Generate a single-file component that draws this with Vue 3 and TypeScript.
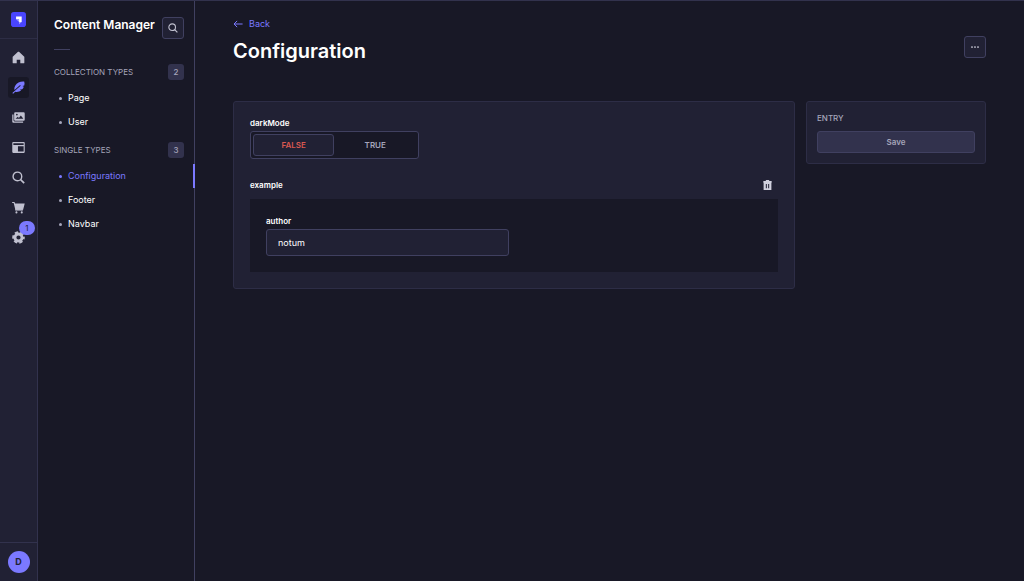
<script setup lang="ts">
import { ref } from 'vue'

interface NavEntry {
  id: string
  label: string
  badge?: number
}

interface Section {
  title: string
  items: string[]
}

const navEntries: NavEntry[] = [
  { id: 'home', label: 'Home' },
  { id: 'content', label: 'Content Manager' },
  { id: 'media', label: 'Media Library' },
  { id: 'builder', label: 'Content-Type Builder' },
  { id: 'search', label: 'Search' },
  { id: 'market', label: 'Marketplace' },
  { id: 'settings', label: 'Settings', badge: 1 },
]

const sections: Section[] = [
  { title: 'Collection types', items: ['Page', 'User'] },
  { title: 'Single types', items: ['Configuration', 'Footer', 'Navbar'] },
]

const activeItem = ref('Configuration')
const darkMode = ref(false)
const author = ref('notum')
</script>

<template>
  <div class="app">
    <nav class="rail" aria-label="Main">
      <a class="brand" href="#" aria-label="Dashboard">
        <svg viewBox="0 0 16 16" width="15" height="15">
          <rect width="16" height="16" rx="3" fill="#4945ff" />
          <path d="M5.400 4.800h6v5.800H8.600V7.700H5.400z" fill="#fff" />
          <path d="M8.600 10.600V7.700H5.500z" fill="#a5a3ff" />
          <path d="M8.600 10.600h2.800l-2.800 2.500z" fill="#a5a3ff" />
        </svg>
      </a>
      <ul class="rail-list">
        <li v-for="entry in navEntries" :key="entry.id">
          <a class="rail-link" :class="{ active: entry.id === 'content' }" href="#" :aria-label="entry.label">
            <svg v-if="entry.id === 'home'" viewBox="0 0 24 24" width="13" height="13" fill="currentColor">
              <path d="M12 1.200c.5 0 1 .2 1.400.6l8.800 8.200c.4.4.6.8.6 1.300V21.500c0 .8-.6 1.300-1.300 1.300h-6.200V16h-6.600v6.800H2.500c-.8 0-1.300-.6-1.300-1.300V11.300c0-.5.2-1 .6-1.300l8.800-8.200c.4-.4.900-.6 1.400-.6z" />
            </svg>
            <svg v-else-if="entry.id === 'content'" viewBox="0 0 24 24" width="13" height="13" fill="currentColor">
              <path d="M22.500 1C16 .2 9.300 3 6.200 8.200c-1.900 3-2.100 5.800-1.600 8.300L15 7.600l1 1.100L3.200 19.700.6 22.100l1.500 1.600 3.900-3.700c3.900.9 8-.1 10.900-2.700l-2.700-1.200 4.600-.7c1.300-1.400 2.400-3 3-4.900l-2.600-1.100 3.400-1c.8-2.400.8-4.900-.1-7.400z" />
            </svg>
            <svg v-else-if="entry.id === 'media'" viewBox="0 0 24 24" width="13" height="13">
              <path fill="currentColor" fill-rule="evenodd" d="M6 2.500h15.500a2 2 0 0 1 2 2v11.500a2 2 0 0 1-2 2H6a2 2 0 0 1-2-2V4.500a2 2 0 0 1 2-2zm.5 12h14.500l-4.700-6-3.600 4.200-2-2zM9 5a1.600 1.600 0 1 0 0 3.200A1.600 1.600 0 0 0 9 5z" />
              <path fill="currentColor" d="M.5 6.500h2.300v11.200c0 .9.700 1.600 1.600 1.600H20.500v2.500H2.500a2 2 0 0 1-2-2z" />
            </svg>
            <svg v-else-if="entry.id === 'builder'" viewBox="0 0 24 24" width="13" height="13" fill="currentColor">
              <path fill-rule="evenodd" d="M2 2h20a1.500 1.500 0 0 1 1.500 1.500v17A1.500 1.500 0 0 1 22 22H2A1.500 1.500 0 0 1 .5 20.500v-17A1.500 1.500 0 0 1 2 2zm.5 2.300v3.200h19V4.300zM11 9.800v9.800h10.500V9.800z" />
            </svg>
            <svg v-else-if="entry.id === 'search'" class="stroked" viewBox="0 0 24 24" width="13" height="13">
              <circle cx="10" cy="10" r="8" stroke-width="2.600" />
              <path d="M15.900 15.900L22.500 22.500" stroke-width="3" />
            </svg>
            <svg v-else-if="entry.id === 'market'" viewBox="0 0 24 24" width="13" height="13" fill="currentColor">
              <path d="M.3 1.800h4.300l1 2.600h17.900l-3 11.800H6.200L3.100 3.800H.3z" />
              <path d="M6 15h14v2.700H6z" />
              <circle cx="8.200" cy="21" r="1.900" />
              <circle cx="18" cy="21" r="1.900" />
            </svg>
            <svg v-else viewBox="0 0 24 24" width="13" height="13">
              <circle cx="12" cy="12" r="6.600" fill="none" stroke="currentColor" stroke-width="5.400" />
              <circle cx="12" cy="12" r="9.700" fill="none" stroke="currentColor" stroke-width="3.800" stroke-dasharray="6.160 4" stroke-dashoffset="3" />
            </svg>
            <span v-if="entry.badge" class="rail-badge">{{ entry.badge }}</span>
          </a>
        </li>
      </ul>
      <div class="account">
        <button class="avatar" type="button" aria-label="Account">D</button>
      </div>
    </nav>

    <aside class="subnav">
      <header class="subnav-head">
        <h2>Content Manager</h2>
        <button class="icon-button" type="button" aria-label="Search">
          <svg class="stroked" viewBox="0 0 24 24" width="10" height="10">
            <circle cx="10" cy="10" r="8" stroke-width="2.600" />
            <path d="M15.900 15.900L22.500 22.500" stroke-width="2.800" />
          </svg>
        </button>
      </header>
      <hr class="short-rule" />
      <section v-for="section in sections" :key="section.title" class="group">
        <div class="group-head">
          <h3>{{ section.title }}</h3>
          <span class="count">{{ section.items.length }}</span>
        </div>
        <ul>
          <li v-for="item in section.items" :key="item">
            <a class="sub-link" :class="{ active: item === activeItem }" href="#" @click.prevent="activeItem = item">{{ item }}</a>
          </li>
        </ul>
      </section>
    </aside>

    <main class="main">
      <a class="back" href="#">
        <svg class="stroked" viewBox="0 0 24 24" width="10" height="10">
          <path d="M23 12H2.500M10 4.500L2.500 12l7.500 7.500" stroke-width="2.400" />
        </svg>
        Back
      </a>
      <div class="title-row">
        <h1>Configuration</h1>
        <button class="icon-button" type="button" aria-label="More actions">
          <svg viewBox="0 0 16 4" width="8" height="2" fill="#e0e0ee">
            <circle cx="2" cy="2" r="1.700" />
            <circle cx="8" cy="2" r="1.700" />
            <circle cx="14" cy="2" r="1.700" />
          </svg>
        </button>
      </div>

      <div class="columns">
        <form class="panel fields" @submit.prevent>
          <fieldset class="toggle-field">
            <legend>darkMode</legend>
            <div class="toggle">
              <button type="button" class="option" :class="{ off: !darkMode }" :aria-pressed="!darkMode" @click="darkMode = false">FALSE</button>
              <button type="button" class="option" :class="{ on: darkMode }" :aria-pressed="darkMode" @click="darkMode = true">TRUE</button>
            </div>
          </fieldset>
          <section>
            <div class="component-head">
              <h4>example</h4>
              <button class="trash" type="button" aria-label="Delete example">
                <svg viewBox="0 0 16 18" width="9" height="10">
                  <path fill="#d0d0de" fill-rule="evenodd" d="M5 0h6v2h4.500v3H15v13H1V5H.5V2H5zM5 7v8h1.800V7zm4.200 0v8H11V7z" />
                </svg>
              </button>
            </div>
            <div class="component-body">
              <div class="field">
                <label for="author">author</label>
                <input id="author" v-model="author" type="text" />
              </div>
            </div>
          </section>
        </form>

        <aside class="panel entry">
          <h3>Entry</h3>
          <button class="save" type="button" disabled>Save</button>
        </aside>
      </div>
    </main>
  </div>
</template>

<style>
body {
  background: #181826;
}
</style>

<style scoped>
* {
  box-sizing: border-box;
}

.app {
  display: flex;
  min-height: 100vh;
  border-top: 1px solid #32324d;
  background: #181826;
  color: #fff;
  font-family: Inter, "Liberation Sans", sans-serif;
  font-size: 9px;
  line-height: 14px;
}

h1, h2, h3, h4, ul, fieldset, legend {
  margin: 0;
  padding: 0;
  border: 0;
}

ul {
  list-style: none;
}

a {
  color: inherit;
  text-decoration: none;
}

button, input {
  margin: 0;
  padding: 0;
  font: inherit;
}

svg {
  display: block;
}

.stroked {
  fill: none;
  stroke: currentColor;
}

.rail {
  display: flex;
  flex: none;
  flex-direction: column;
  width: 38px;
  border-right: 1px solid #32324d;
  background: #212134;
}

.brand {
  display: flex;
  justify-content: center;
  padding: 11px 0;
  border-bottom: 1px solid #2d2d45;
}

.rail-list {
  display: flex;
  flex: 1;
  flex-direction: column;
  align-items: center;
  gap: 9px;
  padding-top: 8px;
}

.rail-link {
  position: relative;
  display: flex;
  align-items: center;
  justify-content: center;
  width: 21px;
  height: 21px;
  border-radius: 3px;
  color: #c0c0cf;
}

.rail-link.active {
  background: #181826;
  color: #7b79ff;
}

.rail-badge {
  position: absolute;
  top: -6px;
  right: -6px;
  width: 16px;
  height: 14px;
  border-radius: 7px;
  background: #7b79ff;
  color: #212134;
  font-size: 8px;
  text-align: center;
}

.account {
  display: flex;
  justify-content: center;
  padding: 8px 0;
  border-top: 1px solid #32324d;
}

.avatar {
  width: 22px;
  height: 22px;
  border: 0;
  border-radius: 50%;
  background: #7b79ff;
  color: #212134;
  font-weight: 700;
}

.subnav {
  flex: none;
  width: 157px;
  padding: 16px 0 16px 16px;
  border-right: 1px solid #404060;
}

.subnav-head {
  display: flex;
  align-items: flex-start;
  justify-content: space-between;
  padding-right: 10px;
}

.subnav-head h2 {
  font-size: 12px;
  font-weight: 600;
  line-height: 15px;
}

.icon-button {
  display: flex;
  flex: none;
  align-items: center;
  justify-content: center;
  width: 22px;
  height: 22px;
  border: 1px solid #404060;
  border-radius: 3px;
  background: #212134;
  color: #c0c0cf;
}

.short-rule {
  width: 16px;
  height: 1px;
  margin: 10px 0 14px;
  border: 0;
  background: #404060;
}

.group {
  margin-bottom: 8px;
}

.group-head {
  display: flex;
  align-items: center;
  justify-content: space-between;
  margin-bottom: 6px;
  padding-right: 10px;
}

.group h3, .entry h3 {
  color: #a5a5ba;
  font-size: 8px;
  font-weight: 500;
  text-transform: uppercase;
}

.group h3 {
  font-weight: 400;
}

.count {
  width: 16px;
  border-radius: 3px;
  background: #32324d;
  color: #a5a5ba;
  font-size: 8px;
  font-weight: 500;
  line-height: 16px;
  text-align: center;
}

.sub-link {
  display: flex;
  align-items: center;
  gap: 6px;
  height: 24px;
  margin-right: -1px;
  padding-left: 5px;
  border-right: 2px solid transparent;
}

.sub-link::before {
  width: 3px;
  height: 3px;
  border-radius: 50%;
  background: #a5a5ba;
  content: "";
}

.sub-link.active {
  border-color: #7b79ff;
  color: #7b79ff;
}

.sub-link.active::before {
  background: #7b79ff;
}

.main {
  flex: 1;
  min-width: 0;
  padding: 16px 38px 38px;
}

.back {
  display: flex;
  align-items: center;
  gap: 6px;
  width: fit-content;
  color: #7b79ff;
}

.title-row {
  display: flex;
  align-items: flex-start;
  justify-content: space-between;
  margin-top: 5px;
  margin-bottom: 35px;
}

h1 {
  font-size: 20px;
  font-weight: 600;
  line-height: 30px;
}

.columns {
  display: grid;
  grid-template-columns: repeat(12, minmax(0, 1fr));
  align-items: start;
  gap: 11px;
}

.panel {
  border: 1px solid #2d2d46;
  border-radius: 3px;
  background: #212134;
}

.fields {
  grid-column: span 9;
  padding: 14px 16px 16px;
}

.toggle-field {
  margin-bottom: 19px;
}

legend, h4, label {
  display: block;
  font-size: 8px;
  font-weight: 600;
}

.toggle {
  display: grid;
  grid-template-columns: 1fr 1fr;
  width: 32%;
  margin-top: 1px;
  padding: 2px;
  border: 1px solid #404060;
  border-radius: 3px;
  background: #181826;
}

.option {
  height: 22px;
  border: 1px solid transparent;
  border-radius: 3px;
  background: transparent;
  color: #a5a5ba;
  font-size: 8px;
  font-weight: 600;
}

.option.off {
  border-color: #404060;
  background: #212134;
  color: #d95850;
}

.option.on {
  border-color: #404060;
  background: #212134;
  color: #7b79ff;
}

.component-head {
  display: flex;
  align-items: center;
  justify-content: space-between;
  margin-bottom: 7px;
  padding-right: 6px;
}

.trash {
  border: 0;
  background: transparent;
}

.component-body {
  display: grid;
  grid-template-columns: 1fr 1fr;
  gap: 11px;
  padding: 15px 16px 16px;
  background: #181826;
}

input {
  display: block;
  width: 100%;
  height: 27px;
  margin-top: 1px;
  padding: 0 11px;
  border: 1px solid #404060;
  border-radius: 3px;
  outline: 0;
  background: #212134;
  color: #fff;
}

.entry {
  grid-column: span 3;
  padding: 9px 10px 10px;
}

.save {
  display: block;
  width: 100%;
  height: 22px;
  margin-top: 6px;
  border: 1px solid #404060;
  border-radius: 3px;
  background: #32324d;
  color: #a5a5ba;
  font-size: 8px;
  font-weight: 600;
}
</style>
